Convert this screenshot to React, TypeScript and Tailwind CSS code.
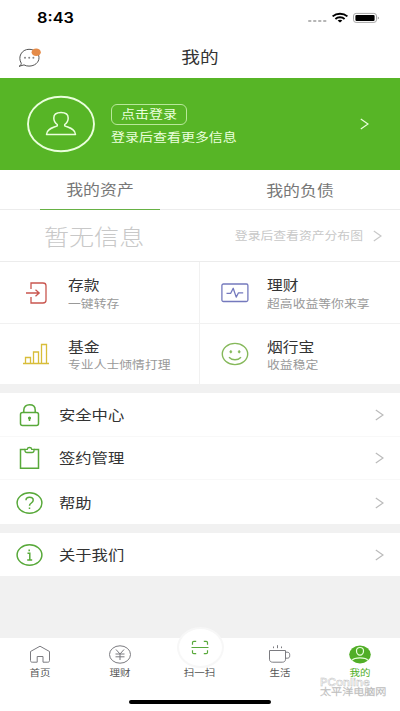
import type { ReactNode } from "react";
import clsx from "clsx";

type Anchor = "left" | "center" | "right";

const ORIGINS: Record<Anchor, string> = {
  left: "origin-left",
  center: "origin-center",
  right: "origin-right",
};

/** Single-line label in the wide face used across the app. */
function Wide({
  className,
  anchor = "left",
  children,
}: {
  className?: string;
  anchor?: Anchor;
  children: ReactNode;
}) {
  return (
    <span
      className={clsx(
        "block w-max scale-x-[1.165] leading-none whitespace-nowrap",
        ORIGINS[anchor],
        className,
      )}
    >
      {children}
    </span>
  );
}

function Chevron({ className }: { className?: string }) {
  return (
    <svg
      className={className}
      width="9"
      height="12"
      viewBox="0 0 9 12"
      fill="none"
      stroke="currentColor"
      strokeWidth="1.2"
    >
      <path d="M.8 1 8 6 .8 11" />
    </svg>
  );
}

function StatusBar() {
  return (
    <div className="flex h-9 items-center justify-between pr-5 pl-[37px] text-black">
      <Wide className="font-[Inter] text-[14px] font-semibold">8:43</Wide>
      <svg width="72" height="12" viewBox="0 0 72 12">
        <g fill="#b5b5b5">
          <rect x="0" y="8" width="3.5" height="2" rx="1" />
          <rect x="5" y="8" width="3.5" height="2" rx="1" />
          <rect x="10" y="8" width="3.5" height="2" rx="1" />
          <rect x="15" y="8" width="3.5" height="2" rx="1" />
        </g>
        <g fill="none" stroke="#000" strokeWidth="1.9">
          <path d="M24.6 4.4c4.2-3.6 10.6-3.6 14.8 0" />
          <path d="M27.4 6.9c2.6-2.2 6.6-2.2 9.2 0" />
        </g>
        <path d="M29.6 8.5c1.4-1.1 3.4-1.1 4.8 0L32 10.6z" />
        <rect x="45.5" y="1.4" width="23" height="9" rx="2.6" fill="none" stroke="#a8a8a8" />
        <rect x="47.4" y="2.9" width="19.2" height="6" rx="1.2" />
        <path d="M69.8 4.4c1.4.6 1.4 2.4 0 3z" fill="#888" />
      </svg>
    </div>
  );
}

function Header() {
  return (
    <header className="relative flex h-[42px] items-center justify-center pb-[2px]">
      <svg className="absolute top-[12px] left-[18px]" width="24" height="20" viewBox="0 0 24 20" fill="none">
        <path
          d="M3.3 15.3C-.6 9 3.7 1.3 11 1.3c5.700 0 10 3.600 10 8.400s-4.300 8.400-10 8.400c-2 0-3.500-.4-5-1.200L1 18.300c1.600-.6 2.100-1.500 2.300-3z"
          stroke="#555"
        />
        <g fill="#888">
          <circle cx="7" cy="9.800" r="1" />
          <circle cx="11.200" cy="9.800" r="1" />
          <circle cx="15.400" cy="9.800" r="1" />
        </g>
        <ellipse cx="18.200" cy="4.200" rx="4.600" ry="3.800" fill="#e58b48" />
      </svg>
      <Wide anchor="center" className="text-[16px] text-[#333]">我的</Wide>
    </header>
  );
}

function LoginBanner() {
  return (
    <section className="flex h-[92px] items-center bg-[#57b526] pr-[31px] pl-[27px] text-[#eaffdc]">
      <svg width="69" height="58" viewBox="0 0 69 58" fill="none" stroke="currentColor">
        <ellipse cx="34" cy="29" rx="33" ry="27.300" strokeWidth="1.900" />
        <path
          d="M30.300 29.500c-2.300-1.700-3.500-4-3.500-6.600 0-3.500 2.600-5.400 7.200-5.400s7.200 1.900 7.200 5.400c0 2.600-1.200 4.900-3.500 6.600v1.300c3.400 1.900 10.600 2.500 10.800 8.700h-29c.2-6.200 7.400-6.800 10.800-8.700z"
          strokeWidth="1.500"
          strokeLinejoin="round"
        />
      </svg>
      <div className="mb-[8px] ml-[15px] flex-1">
        <div className="flex h-[21px] w-[76px] items-center justify-center rounded-[6px] border border-[#b8e89a]">
          <Wide anchor="center" className="text-[12px]">点击登录</Wide>
        </div>
        <Wide className="mt-[6px] mb-[-6px] text-[12px]">登录后查看更多信息</Wide>
      </div>
      <Chevron />
    </section>
  );
}

function AssetTabs() {
  return (
    <section className="bg-white">
      <div className="grid h-[40px] grid-cols-2 border-b border-[#ececec] text-[14.500px] text-[#777]">
        <div className="flex items-start justify-center">
          <div className="flex h-[40px] w-[120px] items-center justify-center border-b border-[#67b145]">
            <Wide anchor="center">我的资产</Wide>
          </div>
        </div>
        <div className="flex items-center justify-center">
          <Wide anchor="center">我的负债</Wide>
        </div>
      </div>
      <div className="flex h-[52px] items-center justify-between border-b border-[#ececec] pr-[18px] pl-[44px] text-[#c8c8c8]">
        <Wide className="text-[21.500px] font-light">暂无信息</Wide>
        <div className="flex items-center gap-[10px]">
          <Wide anchor="right" className="text-[11px]">登录后查看资产分布图</Wide>
          <Chevron />
        </div>
      </div>
    </section>
  );
}

const PRODUCTS = [
  {
    title: "存款",
    note: "一键转存",
    icon: (
      <g stroke="#c9564f" strokeWidth="1.300">
        <path d="M9 10V4h12c1.600 0 3 1.200 3 2.800v14.400c0 1.600-1.400 2.800-3 2.800H9v-6" />
        <path d="M4 14h13M13.500 10.800 17.200 14l-3.700 3.200" />
      </g>
    ),
  },
  {
    title: "理财",
    note: "超高收益等你来享",
    icon: (
      <g stroke="#7479bd" strokeWidth="1.300" strokeLinejoin="round">
        <rect x=".9" y="5" width="26" height="17.500" rx="1.500" />
        <path d="M5.500 14.300h4.200l2.500-5 3 8.800 2.300-4.300h4.700" />
      </g>
    ),
  },
  {
    title: "基金",
    note: "专业人士倾情打理",
    icon: (
      <g stroke="#d8bd39" strokeWidth="1.300">
        <path d="M1 23.500h26M3.500 23.500v-6h5v6M11.500 23.500V12h5v11.500M19.500 23.500v-19h5v19" />
      </g>
    ),
  },
  {
    title: "烟行宝",
    note: "收益稳定",
    icon: (
      <g stroke="#85b85a" strokeWidth="1.400">
        <ellipse cx="14" cy="14" rx="12.700" ry="10.600" />
        <path d="M8 17.200c3 3.400 9 3.400 12 0" />
        <ellipse cx="9.800" cy="11.800" rx="1" ry="1.200" fill="#85b85a" strokeWidth=".6" />
        <ellipse cx="18.200" cy="11.800" rx="1" ry="1.200" fill="#85b85a" strokeWidth=".6" />
      </g>
    ),
  },
];

function ProductGrid() {
  return (
    <section className="grid h-[122px] grid-cols-[199px_1fr] grid-rows-[61px_60px] gap-px bg-[#f1f1f1]">
      {PRODUCTS.map((p) => (
        <div key={p.title} className="flex items-center bg-white pl-[22px] even:pl-[21px]">
          <svg width="28" height="28" viewBox="0 0 28 28" fill="none">
            {p.icon}
          </svg>
          <div className="mt-[2px] ml-[18px]">
            <Wide className="text-[13.500px] text-[#333]">{p.title}</Wide>
            <Wide className="mt-[6px] text-[11px] text-[#999]">{p.note}</Wide>
          </div>
        </div>
      ))}
    </section>
  );
}

const lockIcon = (
  <>
    <rect x="4.500" y="9.500" width="18" height="13" rx="2" />
    <path d="M7.800 9.500V7c0-3.300 2.400-5.200 5.700-5.200s5.700 1.900 5.700 5.200v2.500" />
    <path d="M13.500 15v3" />
    <circle cx="13.500" cy="15" r=".8" fill="currentColor" />
  </>
);

const clipboardIcon = (
  <>
    <path d="M9 3.500H4.500v18.700h18V3.500H18" />
    <path d="M9 3.300h2.300c.2-2.400 4.200-2.400 4.400 0H18v1.200c0 1.300-.9 2-2 2h-5c-1.100 0-2-.7-2-2z" strokeWidth="1.300" />
  </>
);

const helpIcon = (
  <>
    <ellipse cx="13.500" cy="12" rx="12.400" ry="10.200" />
    <path d="M10 9.300c0-4 7.200-4 7.200 0 0 2.700-3.700 2.700-3.700 5.400M13.500 16.400v1.600" />
  </>
);

const infoIcon = (
  <>
    <ellipse cx="13.500" cy="12" rx="12.400" ry="10.200" />
    <path d="M11.500 10.200h2.300v6.600M11.200 17h5M13.200 6.500v1.700" />
  </>
);

function MenuRow({ icon, label }: { icon: ReactNode; label: string }) {
  return (
    <div className="flex h-full items-center px-[16px] pt-px">
      <svg
        className="text-[#58a93a]"
        width="27"
        height="24"
        viewBox="0 0 27 24"
        fill="none"
        stroke="currentColor"
        strokeWidth="1.500"
      >
        {icon}
      </svg>
      <Wide className="mb-[2px] ml-[16px] text-[14px] text-[#333]">{label}</Wide>
      <Chevron className="ml-auto text-[#bbb]" />
    </div>
  );
}

function TabItem({ label, active, children }: { label: string; active?: boolean; children: ReactNode }) {
  return (
    <div className={clsx("flex flex-col items-center", active ? "text-[#51ae27]" : "text-[#555]")}>
      <svg className="mt-[5px]" width="24" height="24" viewBox="0 0 24 24" fill="none" stroke="#7b7b80">
        {children}
      </svg>
      <Wide anchor="center" className="mt-[1px] text-[9px]">{label}</Wide>
    </div>
  );
}

function BottomNav() {
  return (
    <nav className="relative h-[73px] bg-white">
      <div className="grid grid-cols-5">
        <TabItem label="首页">
          <path d="M2.500 8.500 12 3.200l9.500 5.300v9c0 1.200-.7 1.700-1.700 1.700H15v-5.700H9.200v5.700h-5c-1 0-1.700-.5-1.700-1.700z" />
        </TabItem>
        <TabItem label="理财">
          <ellipse cx="12" cy="11.500" rx="10.500" ry="8.700" />
          <path d="m8 6.500 4 4.500 4-4.500M12 11v6M7.500 11h9M7.500 13.800h9" />
        </TabItem>
        <div className="flex flex-col items-center text-[#555]">
          <div className="-mt-[11px] flex h-[41px] w-[47px] items-center justify-center rounded-[50%] border-2 border-[#f7f7f7] bg-white">
            <svg width="18" height="15" viewBox="0 0 18 15" fill="none" stroke="#58a93a" strokeWidth="1.200">
              <path d="M1.500 4.700V2.500c0-.8.500-1.200 1.300-1.200h2.400M12.800 1.300h2.400c.8 0 1.300.4 1.300 1.200v2.200M1.500 10.300v2.200c0 .8.500 1.200 1.300 1.200h2.400M12.800 13.700h2.400c.8 0 1.300-.4 1.300-1.200v-2.200M.5 7.500h17" />
            </svg>
          </div>
          <Wide anchor="center" className="text-[9px]">扫一扫</Wide>
        </div>
        <TabItem label="生活">
          <path d="M1.500 7.500h16v8.700c0 2-1.300 3-3.200 3H4.700c-1.900 0-3.200-1-3.200-3zM17.500 9.200h1.700c1.700 0 2.500 1 2.500 2.500v1c0 1.700-.8 2.500-2.500 2.500h-1.700M5.500 5.200V3.500M9.500 5.200v-3M13.500 5.200V3.500" />
        </TabItem>
        <TabItem label="我的" active>
          <ellipse cx="12" cy="11.500" rx="10.800" ry="9" fill="#51ae27" stroke="none" />
          <path
            d="M12 4.500c-2.200 0-3.500 1.200-3.500 3.200 0 2.400 1.500 4.400 3.500 4.400s3.500-2 3.500-4.400c0-2-1.300-3.200-3.500-3.200zM4 17.300c2.500-3.300 13.500-3.300 16 0"
            stroke="#e9ffdc"
            strokeWidth="1.200"
          />
        </TabItem>
      </div>
      <div className="absolute top-[62px] left-[129px] h-[4px] w-[142px] rounded-full bg-black" />
      <div className="absolute top-[39px] left-[320px] text-white [-webkit-text-stroke:0.4px_#bcbcbc]">
        <Wide className="font-[Inter] text-[10px] font-medium">PConline</Wide>
        <Wide className="text-[9.500px] font-light">太平洋电脑网</Wide>
      </div>
    </nav>
  );
}

export default function App() {
  return (
    <div className="flex h-[711px] w-[400px] flex-col overflow-hidden bg-[#f1f1f1] font-['Noto_Sans_CJK_SC',sans-serif]">
      <div className="bg-white">
        <StatusBar />
        <Header />
      </div>
      <LoginBanner />
      <AssetTabs />
      <ProductGrid />
      <section className="mt-[9px] grid h-[131px] grid-rows-3 divide-y divide-[#f8f8f8] bg-white">
        <MenuRow icon={lockIcon} label="安全中心" />
        <MenuRow icon={clipboardIcon} label="签约管理" />
        <MenuRow icon={helpIcon} label="帮助" />
      </section>
      <section className="mt-[9px] h-[43px] bg-white">
        <MenuRow icon={infoIcon} label="关于我们" />
      </section>
      <div className="flex-1" />
      <BottomNav />
    </div>
  );
}
